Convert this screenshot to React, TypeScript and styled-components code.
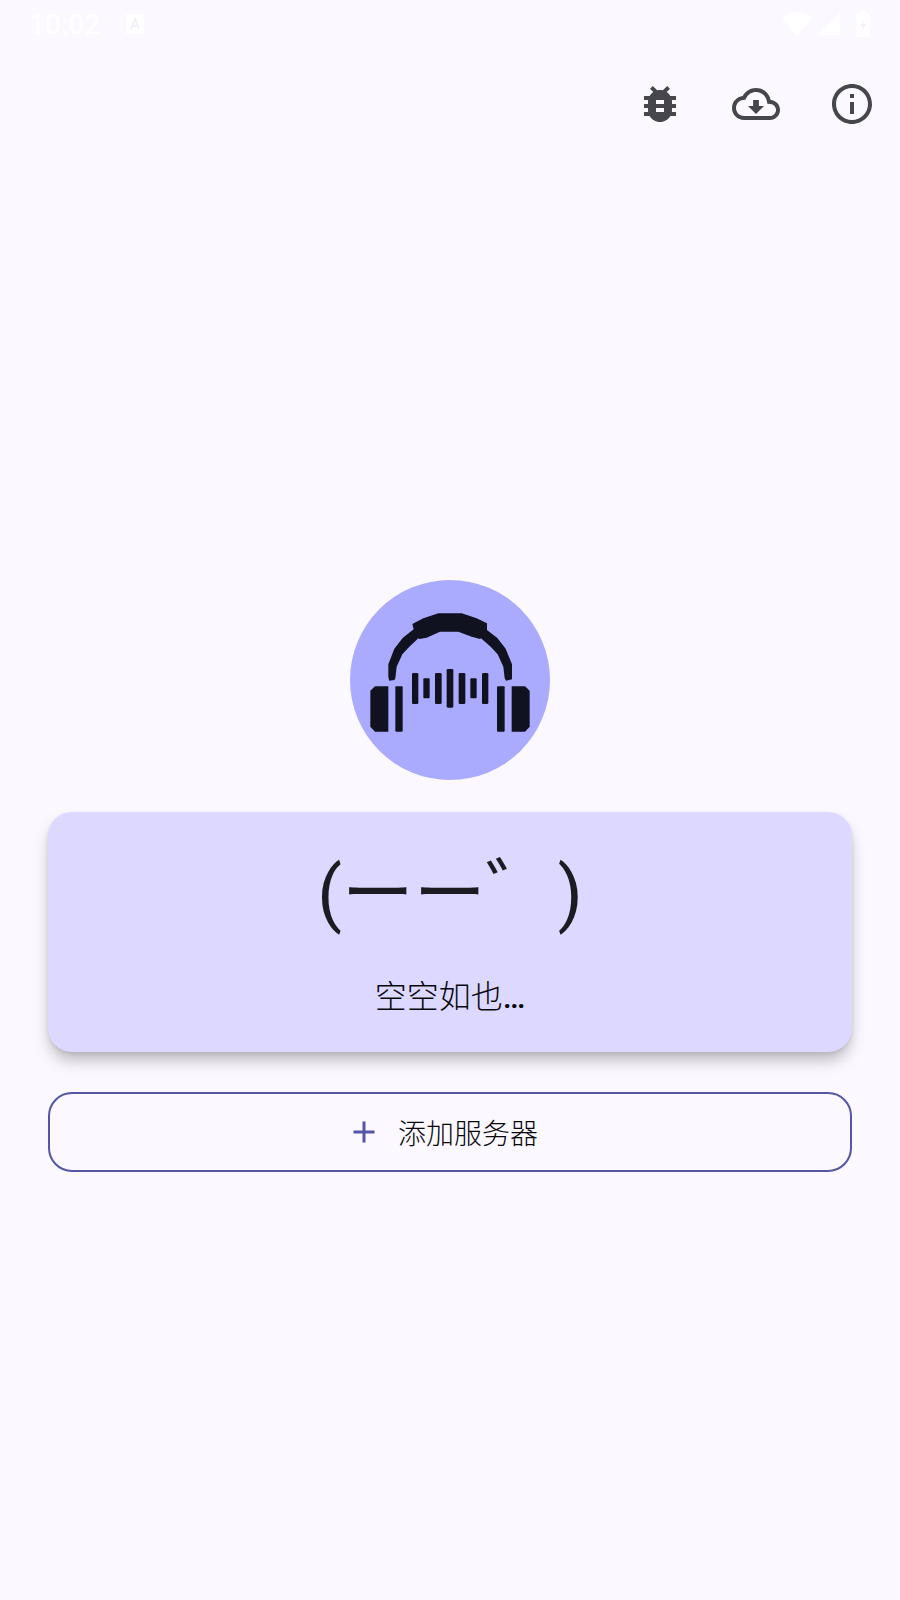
import React from "react";
import styled, { createGlobalStyle } from "styled-components";

const GlobalStyle = createGlobalStyle`
  html, body {
    margin: 0;
    padding: 0;
    background: #fbf8ff;
  }
`;

const Screen = styled.div`
  width: 900px;
  height: 1600px;
  background: #fbf8ff;
  display: flex;
  flex-direction: column;
  font-family: Roboto, "Noto Sans CJK SC", sans-serif;
  color: #1b1b21;
  overflow: hidden;
`;

const StatusBar = styled.div`
  height: 56px;
  padding: 0 30px 8px 29px;
  box-sizing: border-box;
  display: flex;
  align-items: center;
  color: #fff;
`;

const Clock = styled.span`
  font-size: 28px;
  font-weight: 500;
  width: 97px;
`;

const StatusRight = styled.div`
  margin-left: auto;
  display: flex;
  align-items: center;
  gap: 6px;
`;

const Toolbar = styled.div`
  height: 96px;
  display: flex;
  justify-content: flex-end;
`;

const ToolButton = styled.button`
  width: 96px;
  height: 96px;
  padding: 0;
  border: none;
  background: none;
  display: flex;
  align-items: center;
  justify-content: center;
  color: #46464f;
`;

const Content = styled.main`
  flex: 1;
  padding: 428px 48px 0;
  display: flex;
  flex-direction: column;
  align-items: center;
`;

const Logo = styled.div`
  width: 200px;
  height: 200px;
  border-radius: 50%;
  background: #aaaaff;
  display: flex;
`;

const EmptyCard = styled.section`
  margin-top: 32px;
  width: 100%;
  height: 240px;
  box-sizing: border-box;
  padding-top: 30px;
  background: #dcd8ff;
  border-radius: 24px;
  box-shadow: 0 10px 16px -2px rgba(0, 0, 0, 0.26), 0 2px 4px rgba(0, 0, 0, 0.08);
  display: flex;
  flex-direction: column;
  align-items: center;
`;

const Face = styled.div`
  font-size: 72px;
  line-height: 104px;
  white-space: pre;
`;

const EmptyText = styled.div`
  margin-top: 27px;
  font-size: 32px;
  font-weight: 300;
  line-height: 48px;
  color: #08080c;
`;

const Dots = styled.span`
  font-weight: 500;
`;

const AddButton = styled.button`
  margin-top: 40px;
  width: 100%;
  height: 80px;
  box-sizing: border-box;
  padding: 0 16px 0 0;
  border: 2px solid #5355a5;
  border-radius: 24px;
  background: transparent;
  display: flex;
  align-items: center;
  justify-content: center;
  gap: 16px;
  font-family: inherit;
  font-size: 28px;
  font-weight: 300;
  color: #08080c;
`;

const Icon = ({ size, d, color = "currentColor" }: { size: number; d: string; color?: string }) => (
  <svg width={size} height={size} viewBox="0 0 24 24" fill={color}>
    <path d={d} />
  </svg>
);

const BUG =
  "M20 8h-2.81c-.45-.78-1.07-1.45-1.82-1.96L17 4.41 15.59 3l-2.17 2.17C12.96 5.06 12.49 5 12 5c-.49 0-.96.06-1.41.17L8.41 3 7 4.41l1.62 1.63C7.88 6.55 7.26 7.22 6.81 8H4v2h2.09c-.05.33-.09.66-.09 1v1H4v2h2v1c0 .34.04.67.09 1H4v2h2.81c1.04 1.79 2.97 3 5.19 3s4.15-1.21 5.19-3H20v-2h-2.09c.05-.33.09-.66.09-1v-1h2v-2h-2v-1c0-.34-.04-.67-.09-1H20V8zm-6 8h-4v-2h4v2zm0-4h-4v-2h4v2z";
const CLOUD =
  "M19.35 10.04C18.67 6.59 15.64 4 12 4 9.11 4 6.6 5.64 5.35 8.04 2.34 8.36 0 10.91 0 14c0 3.31 2.69 6 6 6h13c2.76 0 5-2.24 5-5 0-2.64-2.05-4.78-4.65-4.96zM19 18H6c-2.21 0-4-1.79-4-4 0-2.05 1.53-3.76 3.56-3.97l1.07-.11.5-.95C8.08 7.14 9.94 6 12 6c2.62 0 4.88 1.86 5.39 4.43l.3 1.5 1.53.11c1.56.1 2.78 1.41 2.78 2.96 0 1.65-1.35 3-3 3zm-5.55-8h-2.9v3H8l4 4 4-4h-2.55z";
const INFO =
  "M11 7h2v2h-2zm0 4h2v6h-2zm1-9C6.48 2 2 6.48 2 12s4.48 10 10 10 10-4.48 10-10S17.52 2 12 2zm0 18c-4.41 0-8-3.59-8-8s3.59-8 8-8 8 3.59 8 8-3.59 8-8 8z";
const PLUS = "M19 13h-6v6h-2v-6H5v-2h6V5h2v6h6v2z";

const Headphones = () => (
  <svg width={200} height={200} viewBox="30 30 600 600" fill="#11121f">
    <path d="M105 349h40v136h-40l-14-15V362z" />
    <rect x="166" y="349" width="22" height="136" rx="3" />
    <path d="M555 349h-40v136h40l14-15V362z" />
    <rect x="471" y="349" width="23" height="136" rx="3" />
    <rect x="216" y="309" width="19" height="93" rx="4" />
    <rect x="250" y="325" width="19" height="60" rx="3" />
    <rect x="285" y="309" width="20" height="93" rx="4" />
    <rect x="320" y="297" width="20" height="116" rx="4" />
    <rect x="356" y="309" width="20" height="93" rx="4" />
    <rect x="391" y="325" width="19" height="60" rx="3" />
    <rect x="426" y="309" width="19" height="93" rx="4" />
    <path d="M145 322V283L163 236 188 204 221 178 217 162 250 145 295 130H365L410 145 441 160V180L472 204 497 236 516 283V328L498 332 494 325 490 290 473 253 452 230 423 205 420 207 395 200 355 185H300L260 203 238 207 235 205 208 230 187 253 170 290 166 325 163 330 148 332z" />
  </svg>
);

const App = () => (
  <Screen>
    <GlobalStyle />
    <StatusBar>
      <Clock>10:02</Clock>
      <svg width={18} height={20} viewBox="0 0 18 20">
        <path fill="#fff" d="M1 0h16a1 1 0 0 1 1 1v18a1 1 0 0 1-1 1H1a1 1 0 0 1-1-1V1a1 1 0 0 1 1-1z" />
        <path fill="none" stroke="#f3efff" strokeWidth="1.6" d="M5 15 9 5l4 10M6.5 12h5" />
      </svg>
      <StatusRight>
        <svg width={30} height={24} viewBox="0 0 30 24" fill="#fff">
          <path d="M0 6C4 2 9 0 15 0s11 2 15 6L15 24z" />
        </svg>
        <svg width={22} height={22} viewBox="0 0 22 22" fill="#fff" style={{ marginRight: 10 }}>
          <path d="M22 0v22H0z" />
        </svg>
        <svg width={14} height={26} viewBox="0 0 14 26">
          <path fill="#fff" d="M4 0h6v2h4v24H0V2h4z" />
          <path fill="#f3efff" d="M8 8 4 15h3l-1 5 4-7H7z" />
        </svg>
      </StatusRight>
    </StatusBar>
    <Toolbar>
      <ToolButton>
        <Icon size={48} d={BUG} />
      </ToolButton>
      <ToolButton>
        <Icon size={48} d={CLOUD} />
      </ToolButton>
      <ToolButton>
        <Icon size={48} d={INFO} />
      </ToolButton>
    </Toolbar>
    <Content>
      <Logo>
        <Headphones />
      </Logo>
      <EmptyCard>
        <Face>{"(ーー゛)"}</Face>
        <EmptyText>
          空空如也<Dots>…</Dots>
        </EmptyText>
      </EmptyCard>
      <AddButton>
        <Icon size={36} d={PLUS} color="#5355a5" />
        <span>添加服务器</span>
      </AddButton>
    </Content>
  </Screen>
);

export default App;
